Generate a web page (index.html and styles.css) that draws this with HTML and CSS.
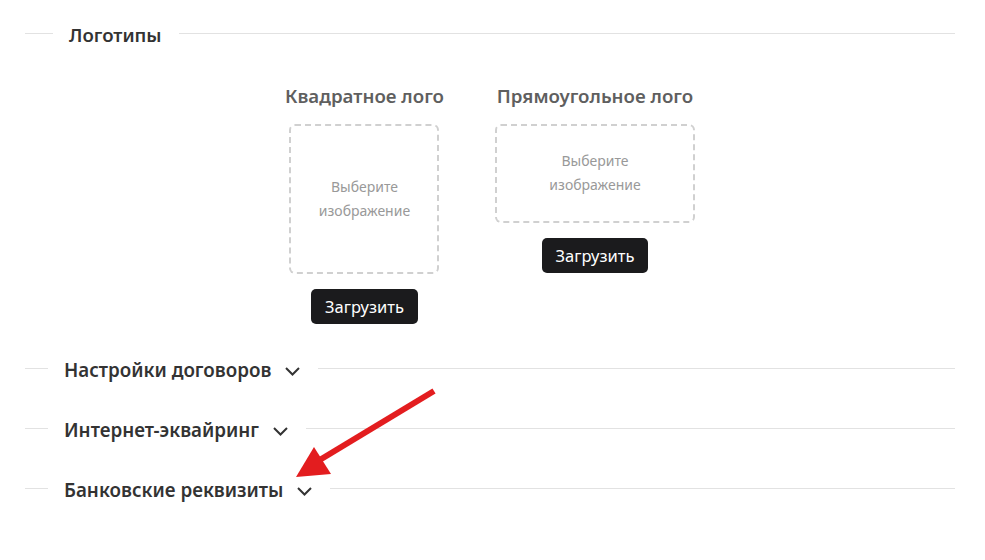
FILE: index.html
```html
<!DOCTYPE html>
<html lang="ru">
<head>
	<meta charset="UTF-8">
	<title>Логотипы</title>
	<link rel="stylesheet" href="styles.css">
</head>
<body>
	<div class="page">
		<div class="divider divider-first">
			<span class="divider-title">Логотипы</span>
		</div>

		<div class="logos">
			<div class="logo-col">
				<h3 class="logo-title">Квадратное лого</h3>
				<div class="drop drop-square">Выберите<br>изображение</div>
				<button class="btn-upload">Загрузить</button>
			</div>
			<div class="logo-col">
				<h3 class="logo-title">Прямоугольное лого</h3>
				<div class="drop drop-rect">Выберите<br>изображение</div>
				<button class="btn-upload">Загрузить</button>
			</div>
		</div>

		<div class="divider divider-toggle">
			<span class="divider-title">Настройки договоров</span>
			<svg class="chevron" width="15" height="9" viewBox="0 0 15 9"><path d="M1 1l6.5 6.5 6.5-6.5"/></svg>
		</div>

		<div class="divider divider-toggle">
			<span class="divider-title">Интернет-эквайринг</span>
			<svg class="chevron" width="15" height="9" viewBox="0 0 15 9"><path d="M1 1l6.5 6.5 6.5-6.5"/></svg>
		</div>

		<div class="divider divider-toggle">
			<span class="divider-title">Банковские реквизиты</span>
			<svg class="chevron" width="15" height="9" viewBox="0 0 15 9"><path d="M1 1l6.5 6.5 6.5-6.5"/></svg>
		</div>

		<svg class="arrow" width="985" height="560" viewBox="0 0 985 560">
			<line x1="434" y1="391" x2="318" y2="461" />
			<polygon points="296,477 314,447 331,474" />
		</svg>
	</div>
</body>
</html>
```

FILE: styles.css
```css
body{
	margin: 0;
	background: #fff;
	font-family: "Noto Sans", "Open Sans", sans-serif;
	color: #333;
}

.page{
	position: relative;
	width: 985px;
	height: 560px;
	padding: 21px 30px 0 25px;
	box-sizing: border-box;
}

.divider{
	display: flex;
	align-items: center;
	height: 24px;
}

.divider::before{
	content: "";
	width: 23px;
	height: 1px;
	background: #e2e2e2;
	margin-right: 16px;
}

.divider::after{
	content: "";
	flex: 1;
	height: 1px;
	background: #e2e2e2;
	margin-left: 17px;
}

.divider-first::before{
	width: 28px;
}

.divider-title{
	padding-top: 4px;
	font-size: 18.6px;
	font-weight: 600;
	line-height: 24px;
	color: #333;
	white-space: nowrap;
}

.divider-toggle .divider-title{
	font-size: 18.8px;
}

.divider-toggle{
	margin-top: 36px;
}

.logos + .divider-toggle{
	margin-top: 32px;
}

.divider-toggle::after{
	margin-left: 18px;
}

.chevron{
	margin-left: 14px;
	margin-top: 6px;
	fill: none;
	stroke: #333;
	stroke-width: 2;
}

.logos{
	display: flex;
	justify-content: center;
	align-items: flex-start;
	gap: 51px;
	margin-top: 39px;
}

.logo-col{
	display: flex;
	flex-direction: column;
	align-items: center;
}

.logo-title{
	margin: 0 0 16px;
	font-size: 18.7px;
	font-weight: 600;
	line-height: 24px;
	color: #5f5f5f;
	white-space: nowrap;
}

.drop{
	display: flex;
	align-items: center;
	justify-content: center;
	box-sizing: border-box;
	border: 2px dashed #d0d0d0;
	border-radius: 6px;
	font-size: 14px;
	line-height: 24px;
	color: #999;
	text-align: center;
}

.drop-square{
	width: 150px;
	height: 150px;
}

.drop-rect{
	width: 200px;
	height: 99px;
	padding-bottom: 2px;
}

.btn-upload{
	margin-top: 15px;
	height: 35px;
	padding: 0 14px;
	border: none;
	border-radius: 5px;
	background: #1b1b1d;
	color: #fff;
	font-family: inherit;
	font-size: 16.5px;
	line-height: 35px;
}

.arrow{
	position: absolute;
	left: 0;
	top: 0;
	pointer-events: none;
}

.arrow line{
	stroke: #e31d1f;
	stroke-width: 6;
}

.arrow polygon{
	fill: #e31d1f;
}
```
